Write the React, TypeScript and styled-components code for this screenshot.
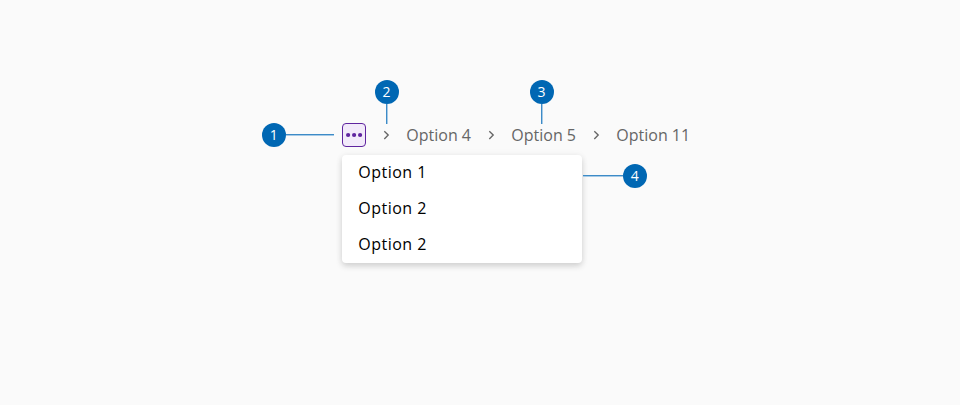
import React from "react";
import styled, { createGlobalStyle } from "styled-components";

const GlobalStyle = createGlobalStyle`
  * { box-sizing: border-box; }
  body { margin: 0; background: #fafafa; font-family: "Open Sans", sans-serif; }
`;

const Page = styled.main`
  height: 405px;
  padding: 123px 0 0 342px;
  background: #fafafa;
`;

const Anatomy = styled.section`
  position: relative;
  width: 348px;
`;

const Trail = styled.nav`
  display: flex;
  align-items: center;
  height: 24px;
`;

const MoreButton = styled.button`
  display: flex;
  align-items: center;
  justify-content: center;
  width: 24px;
  height: 24px;
  padding: 0;
  border: 1px solid #5f249f;
  border-radius: 4px;
  background: #f2eafa;
`;

const Separator = styled.svg`
  flex: none;
  width: 16px;
  height: 16px;
  margin: 0 12px;
`;

const Crumb = styled.a`
  width: 65px;
  padding-left: 0.3px;
  color: #666666;
  font-size: 16px;
  line-height: 24px;
  white-space: nowrap;
`;

const Menu = styled.ul`
  width: 240px;
  margin: 8px 0 0 0.2px;
  padding: 0;
  list-style: none;
  background: #ffffff;
  border-radius: 4px;
  box-shadow: 0 3px 6px rgba(0, 0, 0, 0.16), 0 0 8px rgba(0, 0, 0, 0.04);
`;

const MenuItem = styled.li`
  height: 36px;
  padding: 0 16px;
  color: #000000;
  font-size: 16px;
  line-height: 34px;
  letter-spacing: 0.5px;
`;

const Callout = styled.div<{ $x: number; $y: number; $direction: "row" | "row-reverse" | "column" }>`
  position: absolute;
  left: ${(p) => p.$x}px;
  top: ${(p) => p.$y}px;
  display: flex;
  flex-direction: ${(p) => p.$direction};
  align-items: center;
`;

const Badge = styled.span`
  width: 24px;
  height: 24px;
  border-radius: 50%;
  background: #0067b3;
  color: #ffffff;
  font-size: 14px;
  line-height: 24px;
  text-align: center;
`;

const HorizontalLeader = styled.span<{ $length: number }>`
  width: ${(p) => p.$length}px;
  height: 2px;
  background: linear-gradient(#3d8bc7 50%, #a6cae6 50%);
`;

const VerticalLeader = styled.span`
  width: 2px;
  height: 20px;
  background: linear-gradient(90deg, #3d8bc7 50%, #a6cae6 50%);
`;

const Chevron = () => (
  <Separator viewBox="0 0 16 16" fill="none" stroke="#666666" strokeWidth="1.35">
    <path d="M6.3 4.3 10.2 8.1l-3.9 3.8" />
  </Separator>
);

export default function App() {
  return (
    <>
      <GlobalStyle />
      <Page>
        <Anatomy>
          <Trail>
            <MoreButton aria-label="More">
              <svg width="18" height="6" viewBox="0 0 18 6" fill="#5f249f">
                <circle cx="3.1" cy="3" r="2.1" />
                <circle cx="9.1" cy="3" r="2.1" />
                <circle cx="15.1" cy="3" r="2.1" />
              </svg>
            </MoreButton>
            {["Option 4", "Option 5", "Option 11"].map((label) => (
              <React.Fragment key={label}>
                <Chevron />
                <Crumb>{label}</Crumb>
              </React.Fragment>
            ))}
          </Trail>
          <Menu>
            {["Option 1", "Option 2", "Option 2"].map((label, i) => (
              <MenuItem key={i}>{label}</MenuItem>
            ))}
          </Menu>
          <Callout $x={-80.3} $y={-0.4} $direction="row">
            <Badge>1</Badge>
            <HorizontalLeader $length={48} />
          </Callout>
          <Callout $x={32.6} $y={-43} $direction="column">
            <Badge>2</Badge>
            <VerticalLeader />
          </Callout>
          <Callout $x={187.6} $y={-43} $direction="column">
            <Badge>3</Badge>
            <VerticalLeader />
          </Callout>
          <Callout $x={240.7} $y={40.7} $direction="row-reverse">
            <Badge>4</Badge>
            <HorizontalLeader $length={40} />
          </Callout>
        </Anatomy>
      </Page>
    </>
  );
}
